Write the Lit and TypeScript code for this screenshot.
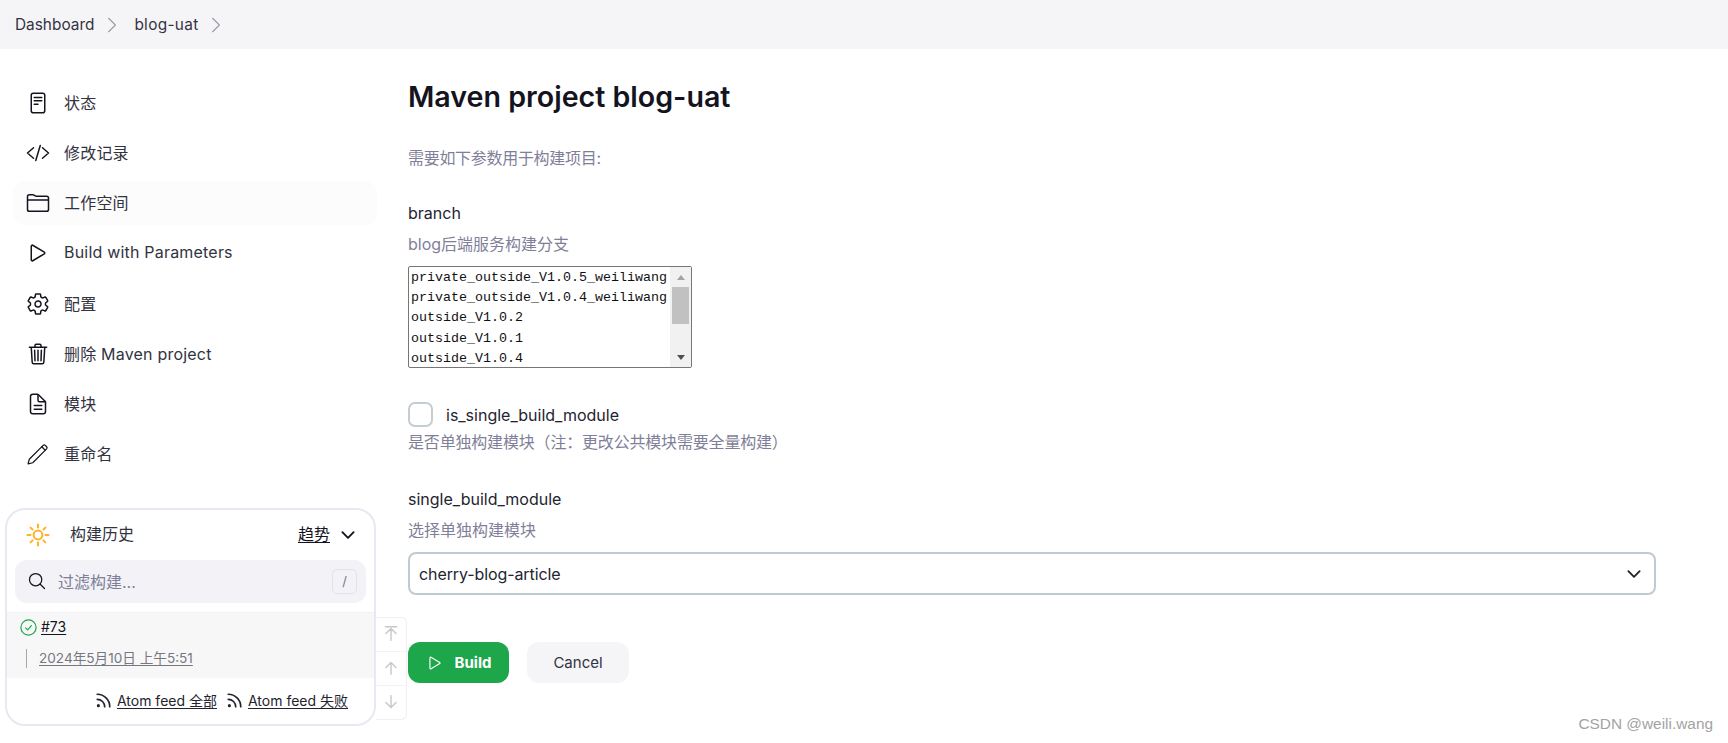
import {LitElement, html, css, svg} from 'lit';
import {customElement} from 'lit/decorators.js';

const ion = (body: unknown, size = 24) => html`<svg class="ico" width=${size} height=${size} viewBox="0 0 512 512" fill="none" stroke="currentColor" stroke-width="32" stroke-linecap="round" stroke-linejoin="round">${body}</svg>`;

const icons = {
  status: svg`<rect x="112" y="48" width="288" height="416" rx="44"/><path d="M176 136h160M176 208h160M176 280h80"/>`,
  code: svg`<path d="M160 368L32 256l128-112M352 368l128-112-128-112M304 96l-96 320"/>`,
  folder: svg`<path d="M440 432H72a40 40 0 01-40-40V120a40 40 0 0140-40h75.89a40 40 0 0122.19 6.72l27.84 18.56a40 40 0 0022.19 6.72H440a40 40 0 0140 40v240a40 40 0 01-40 40zM32 192h448"/>`,
  play: svg`<path d="M112 111v290c0 17.44 17 28.52 31 20.16l247.9-148.37c12.12-7.25 12.12-26.33 0-33.58L143 90.84c-14-8.36-31 2.72-31 20.16z"/>`,
  gear: svg`<path d="M262.29 192.31a64 64 0 1057.4 57.4 64.13 64.13 0 00-57.4-57.4zM416.39 256a154.34 154.34 0 01-1.53 20.79l45.21 35.46a10.81 10.81 0 012.45 13.75l-42.77 74a10.81 10.81 0 01-13.14 4.59l-44.9-18.08a16.11 16.11 0 00-15.17 1.75A164.48 164.48 0 01325 400.8a15.94 15.94 0 00-8.82 12.14l-6.73 47.89a11.08 11.08 0 01-10.68 9.17h-85.54a11.11 11.11 0 01-10.69-8.87l-6.72-47.82a16.07 16.07 0 00-9-12.22 155.3 155.3 0 01-21.46-12.57 16 16 0 00-15.11-1.71l-44.89 18.07a10.81 10.81 0 01-13.14-4.58l-42.77-74a10.8 10.8 0 012.45-13.75l38.21-30a16.05 16.05 0 006-14.08c-.36-4.17-.58-8.33-.58-12.5s.21-8.27.58-12.35a16 16 0 00-6.07-13.94l-38.19-30A10.81 10.81 0 0149.48 186l42.77-74a10.81 10.81 0 0113.14-4.59l44.9 18.08a16.11 16.11 0 0015.17-1.75A164.48 164.48 0 01187 111.2a15.94 15.94 0 008.82-12.14l6.73-47.89A11.08 11.08 0 01213.23 42h85.54a11.11 11.11 0 0110.69 8.87l6.72 47.82a16.07 16.07 0 009 12.22 155.3 155.3 0 0121.46 12.57 16 16 0 0015.11 1.71l44.89-18.07a10.81 10.81 0 0113.14 4.58l42.77 74a10.8 10.8 0 01-2.45 13.75l-38.21 30a16.05 16.05 0 00-6.05 14.08c.33 4.14.55 8.3.55 12.47z"/>`,
  trash: svg`<path d="M112 112l20 320c.95 18.49 14.4 32 32 32h184c17.67 0 30.87-13.51 32-32l20-320M72 112h368M192 112V72a24 24 0 0124-24h80a24 24 0 0124 24v40M256 176v224M184 176l8 224M328 176l-8 224"/>`,
  doc: svg`<path d="M416 221.25V416a48 48 0 01-48 48H144a48 48 0 01-48-48V96a48 48 0 0148-48h98.75a32 32 0 0122.62 9.37l141.26 141.26a32 32 0 019.37 22.62z"/><path d="M256 56v120a32 32 0 0032 32h120M176 288h160M176 368h160"/>`,
  pencil: svg`<path d="M44 468l26-100L366 72a32 32 0 0145 0l29 29a32 32 0 010 45L144 442z" stroke-width="26"/><path d="M336 102l74 74" stroke-width="26"/>`,
  search: svg`<path d="M221.09 64a157.09 157.09 0 10157.09 157.09A157.1 157.1 0 00221.09 64z"/><path d="M338.29 338.29L448 448"/>`,
  chevron: svg`<path d="M112 184l144 144 144-144" stroke-width="48"/>`,
  crumb: svg`<path d="M184 112l144 144-144 144" stroke-width="24"/>`,
  rss: svg`<circle cx="96" cy="416" r="44" fill="currentColor" stroke="none"/><path d="M64 236a212 212 0 01212 212M64 92a356 356 0 01356 356" stroke-width="48"/>`,
  top: svg`<path d="M112 244l144-144 144 144M256 120v312M96 48h320" stroke-width="40"/>`,
  up: svg`<path d="M112 244l144-144 144 144M256 120v312" stroke-width="40"/>`,
  down: svg`<path d="M112 268l144 144 144-144M256 392V80" stroke-width="40"/>`,
};

const sun = html`<svg class="ico" width="26" height="26" viewBox="0 0 26 26" fill="none" stroke="#ffb222" stroke-width="2" stroke-linecap="round">
  <circle cx="13" cy="13" r="4.4"/>
  <path d="M13 2.5v3M13 20.5v3M2.5 13h3M20.5 13h3M5.6 5.6l2 2M18.4 18.4l2 2M5.6 20.4l2-2M18.4 7.6l2-2"/>
</svg>`;

const tick = html`<svg class="ico" width="17" height="17" viewBox="0 0 17 17" fill="none" stroke="#1ea64b" stroke-width="1.2" stroke-linecap="round" stroke-linejoin="round">
  <circle cx="8.5" cy="8.5" r="7.6"/>
  <path d="M5.6 8.8l2 2 3.8-4.2"/>
</svg>`;

const navItems = [
  {icon: icons.status, label: '状态'},
  {icon: icons.code, label: '修改记录'},
  {icon: icons.folder, label: '工作空间', hover: true},
  {icon: icons.play, label: 'Build with Parameters'},
  {icon: icons.gear, label: '配置'},
  {icon: icons.trash, label: '删除 Maven project'},
  {icon: icons.doc, label: '模块'},
  {icon: icons.pencil, label: '重命名'},
];

const branches = [
  'private_outside_V1.0.5_weiliwang',
  'private_outside_V1.0.4_weiliwang',
  'outside_V1.0.2',
  'outside_V1.0.1',
  'outside_V1.0.4',
];

@customElement('app-root')
export class AppRoot extends LitElement {
  static styles = css`
    :host {
      display: block;
      position: relative;
      width: 1728px;
      height: 743px;
      overflow: hidden;
      background: #fff;
      color: #14141f;
      font-family: Inter, "Noto Sans CJK SC", sans-serif;
      font-size: 16px;
      text-spacing-trim: space-all;
    }
    .ico { display: block; flex: none; }
    a { color: inherit; text-decoration: underline; text-underline-offset: 2px; }

    .crumbs {
      height: 49px;
      background: #f5f5f8;
      display: flex;
      align-items: center;
      padding-left: 15px;
      font-size: 15.4px;
      color: #33333f;
    }
    .crumbs .ico { color: #9a9aa8; margin: 0 10px 0 6px; }
    .crumbs .project { letter-spacing: 0.3px; }

    .page { display: flex; }
    .side { width: 408px; flex: none; box-sizing: border-box; padding: 32px 0 0 5px; }
    .nav { display: flex; flex-direction: column; gap: 6.15px; margin-left: 8px; width: 364px; }
    .nav-item {
      height: 44px;
      display: flex;
      align-items: center;
      gap: 14px;
      padding-left: 13px;
      border-radius: 12px;
      color: #33333f;
      font-size: 16px;
      letter-spacing: 0.2px;
    }
    .nav-item span { padding-bottom: 2px; }
    .nav-item .ico { color: #14141f; }
    .nav-item.hover { background: #fcfcfc; }

    .history { display: flex; align-items: flex-end; margin-top: 32px; }
    .card {
      width: 371px;
      height: 218px;
      box-sizing: border-box;
      border: 2px solid #e8e8f0;
      border-radius: 20px;
      display: flex;
      flex-direction: column;
    }
    .card-head {
      display: flex;
      align-items: center;
      height: 50px;
      padding: 0 16px 0 18px;
    }
    .card-head .title { margin-left: 19px; flex: 1; color: #33333f; padding-bottom: 3px; }
    .card-head a { padding-bottom: 3px; }
    .card-head .ico:last-child { margin-left: 8px; }
    .filter {
      margin: 0 8px;
      height: 43px;
      background: #f2f2f7;
      border-radius: 12px;
      display: flex;
      align-items: center;
      padding: 0 9px 0 12px;
      color: #7f7f99;
    }
    .filter .ico { color: #14141f; margin-right: 11px; }
    .filter .ph { flex: 1; }
    .kbd {
      width: 23px;
      height: 23px;
      border: 1px solid #e3e3ea;
      border-radius: 5px;
      display: flex;
      align-items: center;
      justify-content: center;
      font-size: 13px;
      color: #777788;
    }
    .build {
      margin-top: 9px;
      height: 66px;
      background: #f7f7f7;
      border-top: 1px solid #f1f1f4;
      box-sizing: border-box;
      padding: 6px 0 0 13px;
    }
    .build-top { display: flex; align-items: center; gap: 4px; font-size: 14px; height: 18px; }
    .build-top a { padding-bottom: 2px; }
    .build-date {
      margin: 12px 0 0 6px;
      padding-left: 12px;
      border-left: 1px solid #a5a5b5;
      height: 19px;
      line-height: 19px;
      font-size: 13.6px;
      color: #777783;
    }
    .feeds {
      flex: 1;
      display: flex;
      justify-content: flex-end;
      align-items: center;
      gap: 9px;
      padding: 0 26px 2px 0;
      font-size: 14px;
      color: #24242f;
    }
    .feed { display: flex; align-items: center; gap: 4px; }
    .tools {
      width: 31px;
      height: 103px;
      margin-bottom: 6px;
      box-sizing: border-box;
      border: 1px solid #efeff2;
      border-left: none;
      border-radius: 0 6px 6px 0;
      display: flex;
      flex-direction: column;
      color: #c8c8c8;
    }
    .tools div {
      flex: 1;
      display: flex;
      align-items: center;
      justify-content: center;
    }
    .tools div + div { border-top: 1px solid #f3f3f5; }

    .main { flex: 1; display: flex; flex-direction: column; align-items: flex-start; padding-top: 28px; }
    h1 { margin: 0; font-size: 28.6px; line-height: 40px; font-weight: 600; color: #14141f; }
    .lead { margin-top: 29px; letter-spacing: -0.3px; }
    .hint { font-size: 16px; line-height: 24px; color: #7f7f99; }
    .label { line-height: 24px; color: #24242f; }
    .branch { margin-top: 31px; }
    .gap-7 { margin-top: 7px; }

    .listbox {
      margin-top: 10px;
      width: 284px;
      height: 102px;
      box-sizing: border-box;
      border: 1px solid #767676;
      border-radius: 2px;
      display: flex;
      overflow: hidden;
    }
    .options {
      flex: 1;
      padding: 1px 0 0 2px;
      font-family: "Liberation Mono", "DejaVu Sans Mono", monospace;
      font-size: 13.33px;
      line-height: 20.2px;
      color: #111;
    }
    .options div { white-space: nowrap; }
    .bar {
      width: 21px;
      background: #f1f1f1;
      display: flex;
      flex-direction: column;
      align-items: center;
      padding: 0 2px;
      box-sizing: border-box;
    }
    .arrow { height: 20px; display: flex; align-items: center; justify-content: center; }
    .arrow i { display: block; width: 0; height: 0; border-left: 4px solid transparent; border-right: 4px solid transparent; }
    .arrow.up i { border-bottom: 5px solid #a3a3a3; }
    .arrow.dn i { border-top: 5px solid #505050; }
    .thumb { width: 17px; height: 37px; background: #c1c1c1; }
    .spacer { flex: 1; }

    .check { margin-top: 34px; display: flex; align-items: center; gap: 13px; height: 25px; }
    .box {
      width: 25px;
      height: 25px;
      box-sizing: border-box;
      border: 2px solid #c3ced4;
      border-radius: 7px;
    }
    .check-hint { margin-top: 3px; letter-spacing: -0.18px; }
    .module { margin-top: 33px; }

    .select {
      margin-top: 10px;
      width: 1248px;
      height: 43px;
      box-sizing: border-box;
      border: 2px solid #c0cbd1;
      border-radius: 8px;
      display: flex;
      align-items: center;
      justify-content: space-between;
      padding: 0 10px 0 9px;
      color: #24242f;
      letter-spacing: -0.1px;
    }
    .buttons { margin-top: 47px; display: flex; gap: 18px; }
    .btn {
      height: 41px;
      border-radius: 12px;
      display: flex;
      align-items: center;
      justify-content: center;
      box-sizing: border-box;
      font-size: 15px;
    }
    .btn.primary { width: 101px; background: #1ea64b; color: #fff; font-weight: 700; gap: 11px; }
    .btn.secondary { width: 102px; background: #f5f5f8; color: #33333f; font-weight: 400; }

    .mark {
      position: absolute;
      right: 15px;
      top: 715px;
      font-family: "Liberation Sans", sans-serif;
      font-size: 15.4px;
      line-height: 18px;
      color: #a3a3a3;
    }
  `;

  render() {
    return html`
      <div class="crumbs">
        <span>Dashboard</span>${ion(icons.crumb, 24)}
        <span class="project">blog-uat</span>${ion(icons.crumb, 24)}
      </div>
      <div class="page">
        <aside class="side">
          <nav class="nav">
            ${navItems.map((n) => html`
              <div class="nav-item ${n.hover ? 'hover' : ''}">${ion(n.icon)}<span>${n.label}</span></div>
            `)}
          </nav>
          <div class="history">
            <section class="card">
              <div class="card-head">
                ${sun}
                <span class="title">构建历史</span>
                <a>趋势</a>
                ${ion(icons.chevron, 20)}
              </div>
              <div class="filter">
                ${ion(icons.search, 20)}
                <span class="ph">过滤构建...</span>
                <span class="kbd">/</span>
              </div>
              <div class="build">
                <div class="build-top">${tick}<a>#73</a></div>
                <div class="build-date"><a>2024年5月10日 上午5:51</a></div>
              </div>
              <div class="feeds">
                <div class="feed">${ion(icons.rss, 18)}<a>Atom feed 全部</a></div>
                <div class="feed">${ion(icons.rss, 18)}<a>Atom feed 失败</a></div>
              </div>
            </section>
            <div class="tools">
              <div>${ion(icons.top, 18)}</div>
              <div>${ion(icons.up, 18)}</div>
              <div>${ion(icons.down, 18)}</div>
            </div>
          </div>
        </aside>
        <main class="main">
          <h1>Maven project blog-uat</h1>
          <div class="hint lead">需要如下参数用于构建项目:</div>
          <div class="label branch">branch</div>
          <div class="hint gap-7">blog后端服务构建分支</div>
          <div class="listbox">
            <div class="options">${branches.map((b) => html`<div>${b}</div>`)}</div>
            <div class="bar">
              <div class="arrow up"><i></i></div>
              <div class="thumb"></div>
              <div class="spacer"></div>
              <div class="arrow dn"><i></i></div>
            </div>
          </div>
          <div class="check"><div class="box"></div><span class="label">is_single_build_module</span></div>
          <div class="hint check-hint">是否单独构建模块（注：更改公共模块需要全量构建）</div>
          <div class="label module">single_build_module</div>
          <div class="hint gap-7">选择单独构建模块</div>
          <div class="select"><span>cherry-blog-article</span>${ion(icons.chevron, 20)}</div>
          <div class="buttons">
            <div class="btn primary">${ion(icons.play, 18)}<span>Build</span></div>
            <div class="btn secondary">Cancel</div>
          </div>
        </main>
      </div>
      <div class="mark">CSDN @weili.wang</div>
    `;
  }
}
